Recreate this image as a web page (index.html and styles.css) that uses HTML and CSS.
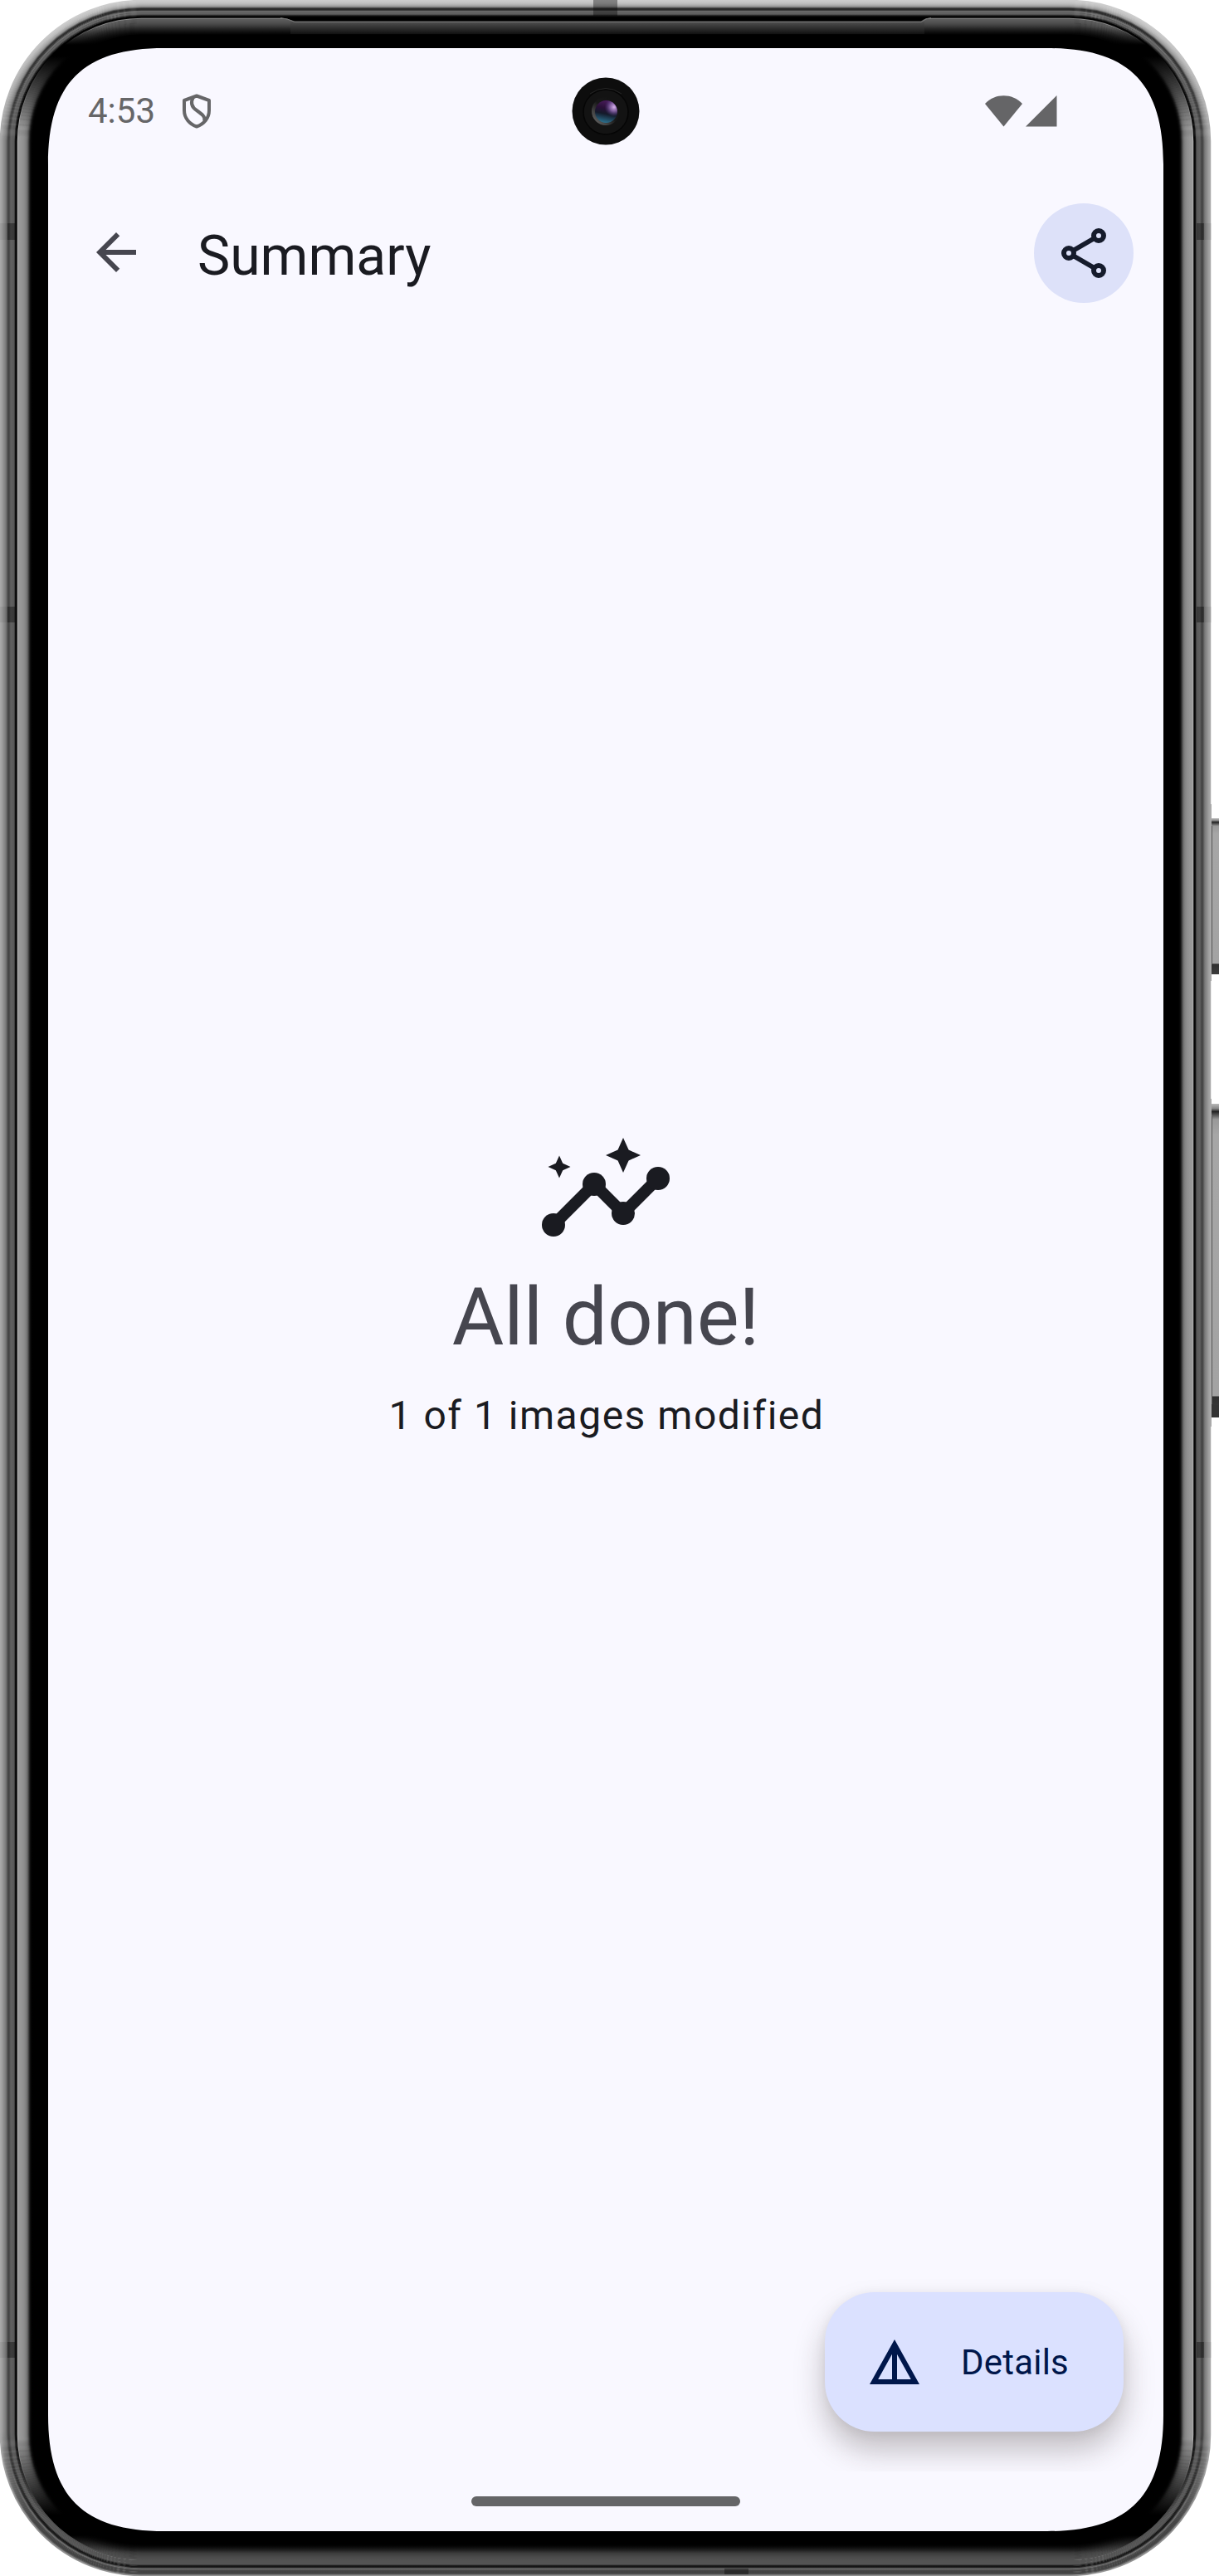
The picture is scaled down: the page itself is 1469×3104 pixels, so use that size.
FILE: index.html
```html
<!DOCTYPE html>
<html lang="en">
<head>
<meta charset="utf-8">
<title>Summary</title>
<link rel="stylesheet" href="styles.css">
</head>
<body>
<div class="device">
  <main class="screen">
    <header class="status-bar">
      <span class="clock">4:53</span>
      <svg class="shield" viewBox="0 0 34 42"><path d="M17 2.500L32 8V20C32 29 26 36.500 17 39.500C8 36.500 2 29 2 20V8Z"/><path d="M13 4C9 11 11 16 17 20C24 25 28 28 26 33"/></svg>
      <svg class="signals" viewBox="0 0 87 38"><path d="M0 10C12-3 33-3 45 10L22.500 37.500Z"/><path d="M49 37.500L86.500 0V37.500Z"/></svg>
    </header>
    <nav class="app-bar">
      <svg class="icon" viewBox="0 0 24 24"><path d="M20 11H7.830l5.590-5.590L12 4l-8 8 8 8 1.410-1.410L7.830 13H20z"/></svg>
      <h1 class="title">Summary</h1>
      <button class="share" aria-label="Share">
        <svg class="icon" viewBox="0 0 24 24"><g fill="none" stroke="#151b2c"><path stroke-width="1.900" d="M16.300 6L7.700 11M7.700 13l8.600 5"/><g stroke-width="2"><circle cx="6" cy="12" r="2"/><circle cx="18" cy="5" r="2"/><circle cx="18" cy="19" r="2"/></g></g></svg>
      </button>
    </nav>
    <section class="result">
      <svg class="insights" viewBox="0 0 24 24"><path d="M3 18L10 11L15 16L21 10" fill="none" stroke="#1a1b21" stroke-width="2"/><circle cx="3" cy="18" r="2"/><circle cx="10" cy="11" r="2"/><circle cx="15" cy="16" r="2"/><circle cx="21" cy="10" r="2"/><path d="M15 9l.940-2.070L18 6l-2.060-.930L15 3l-.920 2.070L12 6l2.080.930zM4 9.930l.600-1.330L5.930 8 4.600 7.400 4 6.070 3.400 7.400 2.070 8l1.330.600z"/></svg>
      <h2 class="headline">All done!</h2>
      <p class="detail">1 of 1 images modified</p>
    </section>
    <div class="fab-area">
      <button class="fab">
        <svg class="icon" viewBox="0 0 24 24"><path d="M12 3L2 21h20L12 3zm1 5.920L18.600 19H13V8.920zm-2 0V19H5.400L11 8.920z"/></svg>
        <span class="fab-label">Details</span>
      </button>
    </div>
    <footer class="gesture"><span class="handle"></span></footer>
  </main>
  <svg class="frame" viewBox="0 0 1469 3104">
    <defs>
      <linearGradient id="gloss" x2="0" y2="1"><stop offset="0" stop-color="#505050"/><stop offset="1" stop-color="#111"/></linearGradient>
      <linearGradient id="key" x2="0" y2="1"><stop offset="0" stop-color="#bbb"/><stop offset=".015" stop-color="#888"/><stop offset=".025" stop-color="#222"/><stop offset=".05" stop-color="#999"/><stop offset=".1" stop-color="#a6a6a6"/><stop offset=".93" stop-color="#a3a3a3"/><stop offset=".935" stop-color="#303030"/><stop offset="1" stop-color="#3c3c3c"/></linearGradient>
      <linearGradient id="lens" x1=".6" y1="0" x2=".4" y2="1"><stop offset="0" stop-color="#4a1c5c"/><stop offset=".35" stop-color="#2a1038"/><stop offset=".6" stop-color="#141a2a"/><stop offset="1" stop-color="#2c7391"/></linearGradient>
      <radialGradient id="glint" cx=".85" cy=".3" r=".42"><stop offset="0" stop-color="#d9b4ee"/><stop offset=".45" stop-color="#9a76bb" stop-opacity=".75"/><stop offset="1" stop-color="#54408a" stop-opacity="0"/></radialGradient>
      <linearGradient id="rim" x1="0" y1="1" x2="1" y2="0"><stop offset="0" stop-color="#777"/><stop offset=".5" stop-color="#181818"/><stop offset="1" stop-color="#101010"/></linearGradient>
    </defs>
    <path fill-rule="evenodd" d="M170 20H1290A149 149 0 0 1 1439 170V2934A149 149 0 0 1 1290 3084H170A149 149 0 0 1 20 2934V170A149 149 0 0 1 170 20ZM198 58C100 58 58 100 58 198V2910C58 3008 100 3050 198 3050H1262C1360 3050 1402 3008 1402 2910V198C1402 100 1360 58 1262 58Z"/>
    <g id="rings" fill="none"></g>
    <path d="M338 21H1122Q1116 21 1110 25.500H355Q347 22 338 21Z"/>
    <path d="M350 26H1114V41H350Z" fill="url(#gloss)"/>
    <path d="M338 21.500Q347 22.500 355 26.500H1110Q1116 22 1122 21.500" fill="none" stroke="#777"/>
    <g fill="#000">
      <path fill-opacity=".36" d="M715 0h29v19h-29zM873 3095h29v7h-29zM9 269h9v20H9zM9 731h9v19H9zM9 2822h9v19H9zM1442 269h9v20h-9zM1442 731h9v19h-9zM1442 2822h9v19h-9z"/>
      <path fill-opacity=".06" d="M0 269h9v20H0zM0 731h9v19H0zM0 2822h9v19H0zM1451 269h9v20h-9zM1451 731h9v19h-9zM1451 2822h9v19h-9z"/>
    </g>
    <path d="M1459 969h1v213h-1zM1459 1324h1v395h-1z" fill="#aaa"/>
    <rect x="1460" y="986" width="9" height="188" fill="url(#key)"/>
    <rect x="1460" y="1330" width="9" height="378" fill="url(#key)"/>
    <rect x="1460" y="1693" width="9" height="15" fill="#333"/>
    <path d="M1460.500 995V1162M1460.500 1345V1692" stroke="#555"/>
    <circle cx="730" cy="134" r="40.500" fill="#0d0d0d"/>
    <circle cx="730" cy="135" r="27" fill="#131313" stroke="#050505" stroke-width="1.500"/>
    <path d="M711 113Q730 100 749 113" fill="none" stroke="#262626"/>
    <circle cx="730" cy="134" r="17" fill="url(#rim)"/>
    <circle cx="730.500" cy="134.500" r="13.500" fill="url(#lens)"/>
    <circle cx="730.500" cy="134.500" r="13.500" fill="url(#glint)"/>
  </svg>
</div>
<script src="frame.js"></script>
</body>
</html>
```
FILE: styles.css
```css
* { box-sizing: border-box; }
body {
  margin: 0;
  background: #fff;
  font-family: Roboto, "Liberation Sans", sans-serif;
}
.device {
  position: relative;
  width: 1469px;
  height: 3104px;
  padding: 58px 67px 54px 58px;
  overflow: hidden;
}
.screen {
  display: flex;
  flex-direction: column;
  height: 2992px;
  border-radius: 100px;
  background: #f9f8ff;
}
.frame {
  position: absolute;
  inset: 0;
  width: 1469px;
  height: 3104px;
  pointer-events: none;
}
h1, h2, p { margin: 0; font-weight: 400; }
button { border: 0; padding: 0; font: inherit; }
.icon { display: block; width: 72px; height: 72px; }

.status-bar {
  display: flex;
  align-items: center;
  height: 154px;
  padding: 0 128px 2px 48px;
  color: #666668;
}
.clock { width: 114px; font-size: 42px; line-height: 50px; }
.shield { width: 34px; height: 42px; fill: none; stroke: currentColor; stroke-width: 4; stroke-linejoin: round; }
.signals { width: 87px; height: 38px; margin-left: auto; fill: #656567; }

.app-bar {
  display: flex;
  align-items: center;
  height: 184px;
  padding: 2px 36px 0 46px;
  fill: #46464f;
}
.app-bar > .icon { margin-bottom: 2px; }
.title {
  margin: 8px 0 0 62px;
  font-size: 66px;
  line-height: 84px;
  color: #1a1b21;
}
.share {
  display: grid;
  place-items: center;
  width: 120px;
  height: 120px;
  margin-left: auto;
  border-radius: 50%;
  background: #dde1f9;
}
.result {
  flex: 1;
  display: flex;
  flex-direction: column;
  align-items: center;
  padding-top: 954px;
}
.insights { display: block; width: 168px; height: 168px; fill: #1a1b21; }
.headline { margin-top: 9px; font-size: 96px; line-height: 120px; color: #46464f; }
.detail { margin-top: 23px; padding-left: 2px; font-size: 48px; line-height: 72px; letter-spacing: 1.5px; color: #1a1b21; }
.fab-area {
  display: flex;
  justify-content: flex-end;
  height: 298px;
  padding: 82px 48px 48px;
  overflow: hidden;
}
.fab {
  display: flex;
  align-items: center;
  gap: 44px;
  width: 360px;
  height: 168px;
  padding-left: 48px;
  border-radius: 60px;
  background: #dbe1ff;
  color: #00174b;
  fill: #00174b;
  font-size: 42px;
  letter-spacing: .2px;
  box-shadow: 0 22px 36px rgba(40, 30, 30, .27), 0 2px 14px rgba(40, 30, 30, .06);
}
.fab-label { padding-top: 1px; }
.gesture { display: flex; justify-content: center; height: 72px; padding-top: 30px; }
.handle { width: 324px; height: 12px; border-radius: 6px; background: #656567; }
```
FILE: frame.js
```js
// Metal band and glass edge: one-pixel rings, listed from the outside in.
// Each entry is the grey level on the top, side and bottom of the device.
const levels = [
  [205, 170, 150], [203, 165, 130], [200, 160, 85], [196, 152, 68], [190, 144, 66],
  [182, 136, 66], [172, 128, 68], [160, 118, 76], [140, 100, 110], [90, 75, 90],
  [45, 66, 35], [42, 72, 22], [50, 88, 20], [95, 96, 60], [115, 94, 84],
  [88, 92, 84], [100, 92, 83], [88, 80, 83], [50, 20, 82], [20, 5, 81],
  [0, 10, 80], [10, 175, 78], [135, 155, 76], [92, 152, 74], [91, 152, 71],
  [88, 150, 68], [84, 148, 64], [80, 146, 60], [76, 143, 55], [71, 139, 49],
  [66, 134, 43], [60, 128, 37], [54, 118, 31], [49, 102, 25], [44, 75, 19],
  [39, 45, 13], [34, 20, 8], [29, 8, 4], [24, 2, 0], [18, 0, 0], [12, 0, 0]
];
const ns = "http://www.w3.org/2000/svg";
const rings = document.getElementById("rings");
function add(parent, name, attrs) {
  const el = document.createElementNS(ns, name);
  for (const key in attrs) el.setAttribute(key, attrs[key]);
  return parent.appendChild(el);
}
levels.forEach(([top, side, bottom], d) => {
  const grad = add(rings, "linearGradient", {
    id: "ring" + d, gradientUnits: "userSpaceOnUse", x1: 0, y1: 0, x2: 0, y2: 3104
  });
  const glass = d > 20;
  const stops = glass
    ? [[0, top], [32, top], [54, 0], [68, 0], [155, side], [2940, side], [3030, 0], [3055, 0], [3076, bottom], [3104, bottom]]
    : [[0, top], [30, top], [170, side], [2930, side], [3040, bottom], [3104, bottom]];
  for (const [y, g] of stops) {
    add(grad, "stop", { offset: y / 3104, "stop-color": `rgb(${g},${g},${g})` });
  }
  add(rings, "rect", {
    x: d + .5, y: d + .5, width: 1458 - 2 * d, height: 3103 - 2 * d,
    rx: 170 - d, stroke: `url(#ring${d})`, "stroke-width": 1.5
  });
});
```
